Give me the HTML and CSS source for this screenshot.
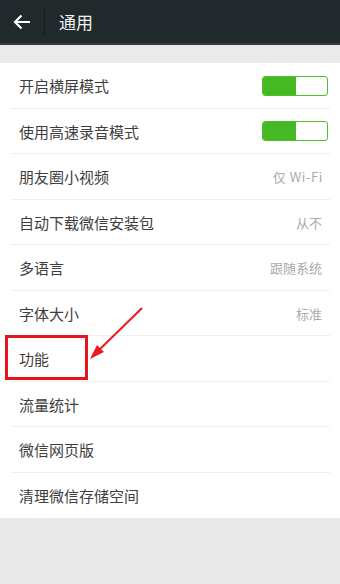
FILE: index.html
```html
<!DOCTYPE html>
<html lang="zh">
<head>
<meta charset="utf-8">
<link rel="stylesheet" href="styles.css">
</head>
<body>
<div class="screen">
  <header class="bar">
    <svg class="back" width="18" height="16" viewBox="0 0 18 16"><path d="M17 8H2.5M8.5 1.5L2 8l6.5 6.5" fill="none" stroke="#fff" stroke-width="2.2"/></svg>
    <span class="sep"></span>
    <span class="title">通用</span>
  </header>
  <div class="gap"></div>
  <ul class="list">
    <li class="row"><span class="label">开启横屏模式</span><span class="toggle"><span class="on"></span></span></li>
    <li class="row"><span class="label">使用高速录音模式</span><span class="toggle"><span class="on"></span></span></li>
    <li class="row"><span class="label">朋友圈小视频</span><span class="value wifi">仅 Wi-Fi</span></li>
    <li class="row"><span class="label">自动下载微信安装包</span><span class="value">从不</span></li>
    <li class="row"><span class="label">多语言</span><span class="value">跟随系统</span></li>
    <li class="row"><span class="label">字体大小</span><span class="value">标准</span></li>
    <li class="row"><span class="label">功能</span></li>
    <li class="row"><span class="label">流量统计</span></li>
    <li class="row"><span class="label">微信网页版</span></li>
    <li class="row last"><span class="label">清理微信存储空间</span></li>
  </ul>
  <div class="mark-box"></div>
  <svg class="mark-arrow" width="70" height="70" viewBox="0 0 70 70">
    <path d="M60 11L14 56" stroke="#e81c1c" stroke-width="2" fill="none"/>
    <path d="M8 62L15 48L22 55Z" fill="#e81c1c"/>
  </svg>
</div>
</body>
</html>
```
FILE: styles.css
```css
html, body {
  margin: 0;
  padding: 0;
  background: #e9e9e9;
}
body {
  font-family: "Noto Sans CJK SC", "Noto Sans", sans-serif;
}
.screen {
  position: relative;
  width: 340px;
  height: 584px;
  overflow: hidden;
  background: #e9e9e9;
}
.bar {
  height: 43px;
  background: #22292c;
  border-bottom: 2px solid #35393b;
  display: flex;
  align-items: center;
}
.back {
  margin-left: 13px;
  display: block;
}
.sep {
  width: 1px;
  height: 26px;
  background: #151a1c;
  margin-left: 13px;
}
.title {
  margin-left: 14px;
  color: #f2f2f2;
  font-size: 17px;
  line-height: 1;
  margin-top: -1px;
}
.gap {
  height: 18px;
  background: #eaeaea;
}
.list {
  list-style: none;
  margin: 0;
  padding: 0;
  background: #fff;
}
.row {
  position: relative;
  height: 45.5px;
  display: flex;
  align-items: center;
  justify-content: space-between;
  padding: 0 12px 0 19px;
  box-sizing: border-box;
}
.row::after {
  content: "";
  position: absolute;
  left: 11px;
  right: 10px;
  bottom: 0;
  height: 1px;
  background: #efefef;
}
.row.last::after {
  display: none;
}
.label {
  font-size: 15px;
  color: #3e3e3e;
}
.value {
  font-size: 13px;
  color: #ababab;
  margin-right: 6px;
}
.value.wifi {
  letter-spacing: 0.6px;
  margin-right: 5px;
}
.toggle {
  width: 66px;
  height: 20px;
  box-sizing: border-box;
  border: 1px solid #4cbf2a;
  border-radius: 3px;
  background: #fff;
  display: flex;
  overflow: hidden;
}
.toggle .on {
  width: 33px;
  height: 100%;
  background: #45b923;
}
.mark-box {
  position: absolute;
  left: 5px;
  top: 335px;
  width: 83px;
  height: 45px;
  box-sizing: border-box;
  border: 3px solid #e8141c;
}
.mark-arrow {
  position: absolute;
  left: 82px;
  top: 297px;
}
```
